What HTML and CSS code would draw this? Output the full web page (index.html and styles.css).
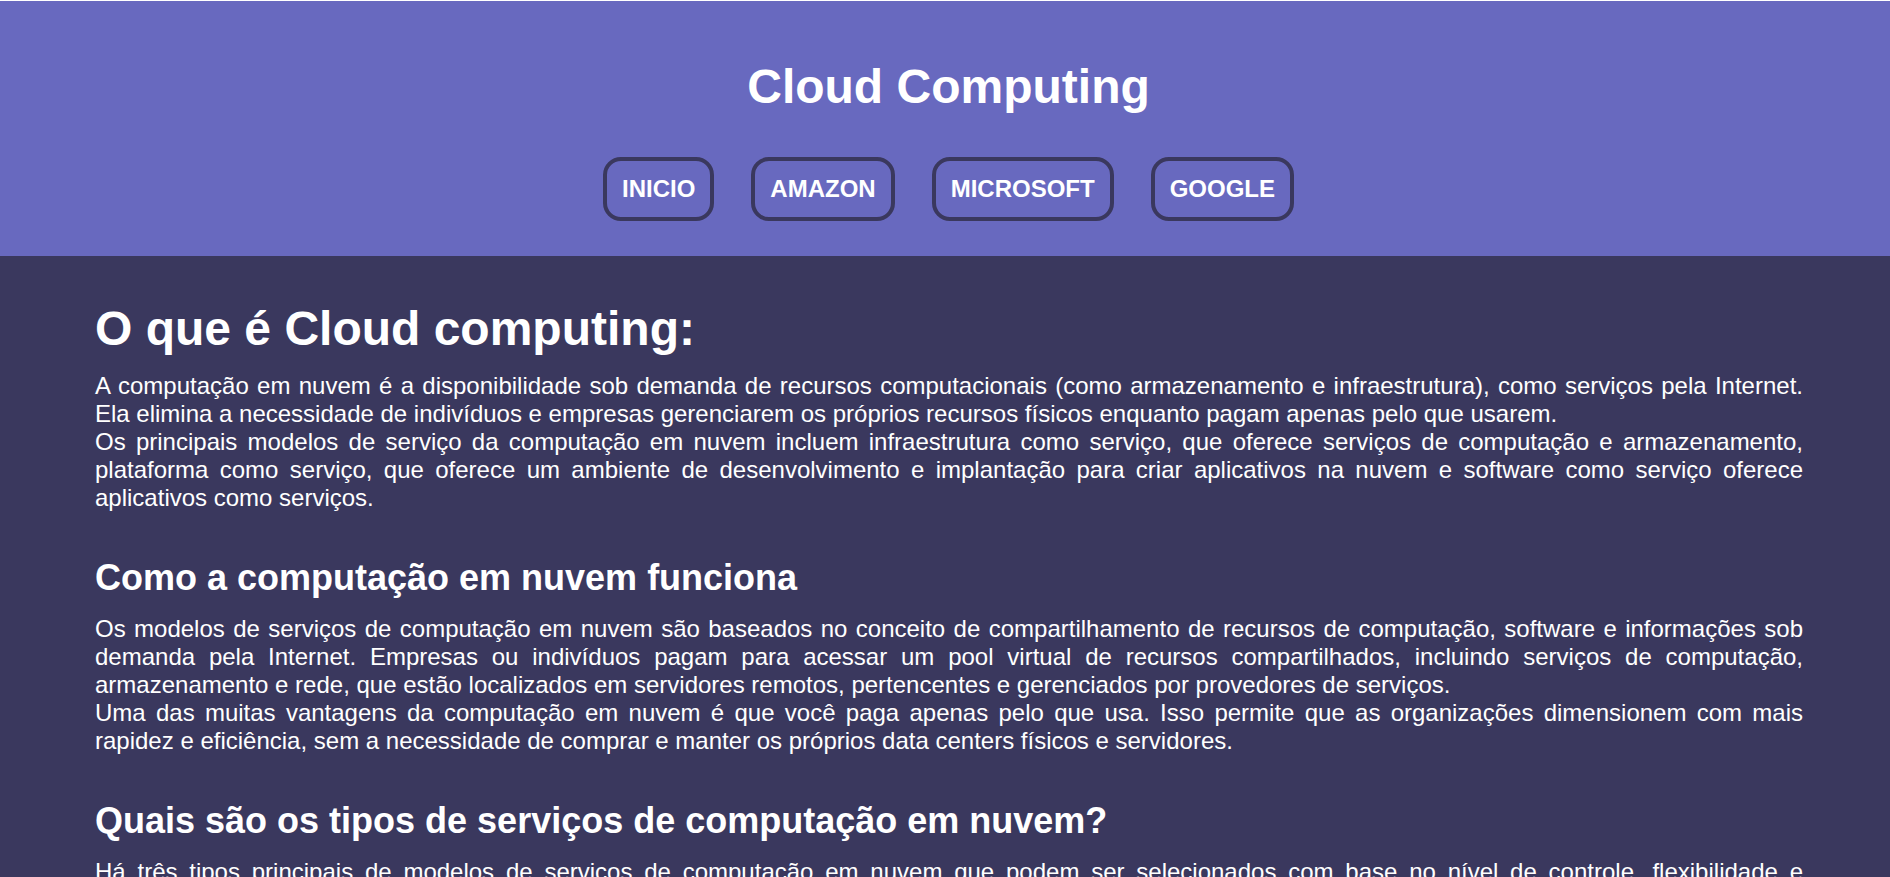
FILE: index.html
```html
<!DOCTYPE html>
<html lang="pt-BR">
<head>
<meta charset="utf-8">
<title>Cloud Computing</title>
<link rel="stylesheet" href="styles.css">
</head>
<body>
<header class="site-header">
  <h1 class="site-title">Cloud Computing</h1>
  <nav class="nav">
    <a class="nav-btn" href="#">INICIO</a>
    <a class="nav-btn" href="#">AMAZON</a>
    <a class="nav-btn" href="#">MICROSOFT</a>
    <a class="nav-btn" href="#">GOOGLE</a>
  </nav>
</header>
<main class="content">
  <section class="block">
    <h2 class="title-lg">O que é Cloud computing:</h2>
    <p class="text">A computação em nuvem é a disponibilidade sob demanda de recursos computacionais (como armazenamento e infraestrutura), como serviços pela Internet. Ela elimina a necessidade de indivíduos e empresas gerenciarem os próprios recursos físicos enquanto pagam apenas pelo que usarem.<br>Os principais modelos de serviço da computação em nuvem incluem infraestrutura como serviço, que oferece serviços de computação e armazenamento, plataforma como serviço, que oferece um ambiente de desenvolvimento e implantação para criar aplicativos na nuvem e software como serviço oferece aplicativos como serviços.</p>
  </section>
  <section class="block">
    <h3 class="title-md">Como a computação em nuvem funciona</h3>
    <p class="text">Os modelos de serviços de computação em nuvem são baseados no conceito de compartilhamento de recursos de computação, software e informações sob demanda pela Internet. Empresas ou indivíduos pagam para acessar um pool virtual de recursos compartilhados, incluindo serviços de computação, armazenamento e rede, que estão localizados em servidores remotos, pertencentes e gerenciados por provedores de serviços.<br>Uma das muitas vantagens da computação em nuvem é que você paga apenas pelo que usa. Isso permite que as organizações dimensionem com mais rapidez e eficiência, sem a necessidade de comprar e manter os próprios data centers físicos e servidores.</p>
  </section>
  <section class="block">
    <h3 class="title-md">Quais são os tipos de serviços de computação em nuvem?</h3>
    <p class="text">Há três tipos principais de modelos de serviços de computação em nuvem que podem ser selecionados com base no nível de controle, flexibilidade e gerenciamento de que você precisa: infraestrutura como serviço (IaaS), plataforma como serviço (PaaS) e software como serviço (SaaS).</p>
  </section>
</main>
</body>
</html>
```

FILE: styles.css
```css
html {
  background: #3a385e;
}

body {
  margin: 0;
  font-family: "Liberation Sans", Arial, sans-serif;
  color: #ffffff;
  background: #3a385e;
}

.site-header {
  background: #6869bf;
  border-top: 1px solid #ffffff;
  padding: 58px 0 35px 7px;
  display: flex;
  flex-direction: column;
  align-items: center;
}

.site-title {
  margin: 0 0 43px;
  font-size: 48px;
  font-weight: bold;
  line-height: normal;
}

.nav {
  display: flex;
  justify-content: center;
  gap: 37px;
}

.nav-btn {
  display: block;
  padding: 14px 15px;
  border: 4px solid #3a385e;
  border-radius: 18px;
  color: #ffffff;
  text-decoration: none;
  font-size: 24px;
  font-weight: bold;
  line-height: normal;
}

.content {
  padding: 45px 87px 40px 95px;
}

.block + .block {
  margin-top: 45px;
}

.title-lg {
  margin: 0 0 16px;
  font-size: 48px;
  font-weight: bold;
  line-height: normal;
}

.title-md {
  margin: 0 0 16px;
  font-size: 36px;
  font-weight: bold;
  line-height: normal;
}

.text {
  margin: 0;
  font-size: 24px;
  line-height: normal;
  text-align: justify;
}
```
